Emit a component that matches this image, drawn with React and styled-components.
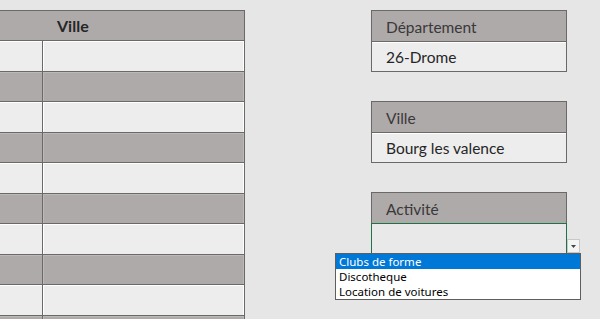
import React from 'react';
import styled, { createGlobalStyle } from 'styled-components';

const GlobalStyle = createGlobalStyle`
  html, body {
    margin: 0;
    padding: 0;
    background: #e6e6e6;
    overflow: hidden;
  }
  body {
    font-family: Lato, "Open Sans", sans-serif;
  }
`;

const LINE = '#6b6868';
const DARK = '#aeaaaa';
const LIGHT = '#ededed';

const Page = styled.div`
  display: flex;
  align-items: flex-start;
  padding-top: 10px;
  height: 319px;
  box-sizing: border-box;
  overflow: hidden;
`;

const Table = styled.div`
  width: 245px;
  flex: none;
  box-sizing: border-box;
  border-top: 1px solid ${LINE};
  border-right: 1px solid ${LINE};
`;

const HeaderRow = styled.div`
  height: 30px;
  box-sizing: border-box;
  border-bottom: 1px solid ${LINE};
  background: ${DARK};
  display: flex;
  align-items: center;
  padding-left: 57px;
  font-weight: 700;
  font-size: 16px;
  color: #262626;
`;

const Row = styled.div`
  display: grid;
  grid-template-columns: 43px 1fr;
  height: 30.5px;
  box-sizing: border-box;
  border-bottom: 1px solid ${LINE};
  background: ${(p) => (p.$dark ? DARK : LIGHT)};
  box-shadow: inset 0 1px 0 ${(p) => (p.$dark ? '#bdb9b9' : '#ffffff')},
    inset -1px 0 0 ${(p) => (p.$dark ? '#bdb9b9' : '#ffffff')};
`;

const Cell = styled.div`
  border-right: 1px solid ${LINE};
  box-shadow: 1px 0 0 ${(p) => (p.$dark ? '#bdb9b9' : '#ffffff')};
`;

const Side = styled.div`
  margin-left: 126px;
  width: 196px;
  display: flex;
  flex-direction: column;
  gap: 29px;
`;

const Box = styled.div`
  position: relative;
  border: 1px solid ${LINE};
  box-sizing: border-box;
  font-size: 15.5px;
  color: #333;
`;

const BoxHead = styled.div`
  height: 31px;
  box-sizing: border-box;
  background: ${DARK};
  border-bottom: 1px solid ${(p) => (p.$active ? '#217346' : LINE)};
  padding-left: 14px;
  padding-top: 1px;
  display: flex;
  align-items: center;
  color: #3a3838;
`;

const BoxValue = styled.div`
  height: 29px;
  background: ${(p) => (p.$active ? '#e9e9e9' : LIGHT)};
  box-shadow: inset 0 1px 0 ${(p) => (p.$active ? 'transparent' : '#fff')};
  padding-left: 14px;
  display: flex;
  align-items: center;
  color: #262626;
  ${(p) => p.$active && `outline: 1px solid #217346; outline-offset: 0;`}
`;

const ArrowButton = styled.div`
  position: absolute;
  left: 195px;
  top: 46px;
  width: 13px;
  height: 14px;
  box-sizing: border-box;
  background: #f4f4f4;
  border: 1px solid #c8c8c8;
  display: flex;
  align-items: center;
  justify-content: center;
`;

const List = styled.div`
  position: absolute;
  left: -37px;
  top: 60px;
  width: 246px;
  height: 47px;
  box-sizing: border-box;
  background: #fff;
  border: 1px solid #5e5e5e;
  font-family: "Noto Sans", sans-serif;
  font-size: 11.5px;
  color: #000;
`;

const Item = styled.div`
  height: 15px;
  line-height: 15px;
  padding-left: 3px;
  white-space: nowrap;
  background: ${(p) => (p.$selected ? '#0078d7' : 'transparent')};
  color: ${(p) => (p.$selected ? '#fff' : '#000')};
`;

const rows = Array.from({ length: 10 }, (_, i) => i % 2 === 1);

const Field = ({ label, value }) => (
  <Box>
    <BoxHead>{label}</BoxHead>
    <BoxValue>{value}</BoxValue>
  </Box>
);

const App = () => (
  <>
    <GlobalStyle />
    <Page>
      <Table>
        <HeaderRow>Ville</HeaderRow>
        {rows.map((dark, i) => (
          <Row key={i} $dark={dark}>
            <Cell $dark={dark} />
            <div />
          </Row>
        ))}
      </Table>
      <Side>
        <Field label="Département" value="26-Drome" />
        <Field label="Ville" value="Bourg les valence" />
        <Box>
          <BoxHead $active>Activité</BoxHead>
          <BoxValue $active />
          <ArrowButton>
            <svg width="5" height="3" viewBox="0 0 5 3">
              <path d="M0 0h5L2.5 3z" fill="#444" />
            </svg>
          </ArrowButton>
          <List>
            <Item $selected>Clubs de forme</Item>
            <Item>Discotheque</Item>
            <Item>Location de voitures</Item>
          </List>
        </Box>
      </Side>
    </Page>
  </>
);

export default App;
